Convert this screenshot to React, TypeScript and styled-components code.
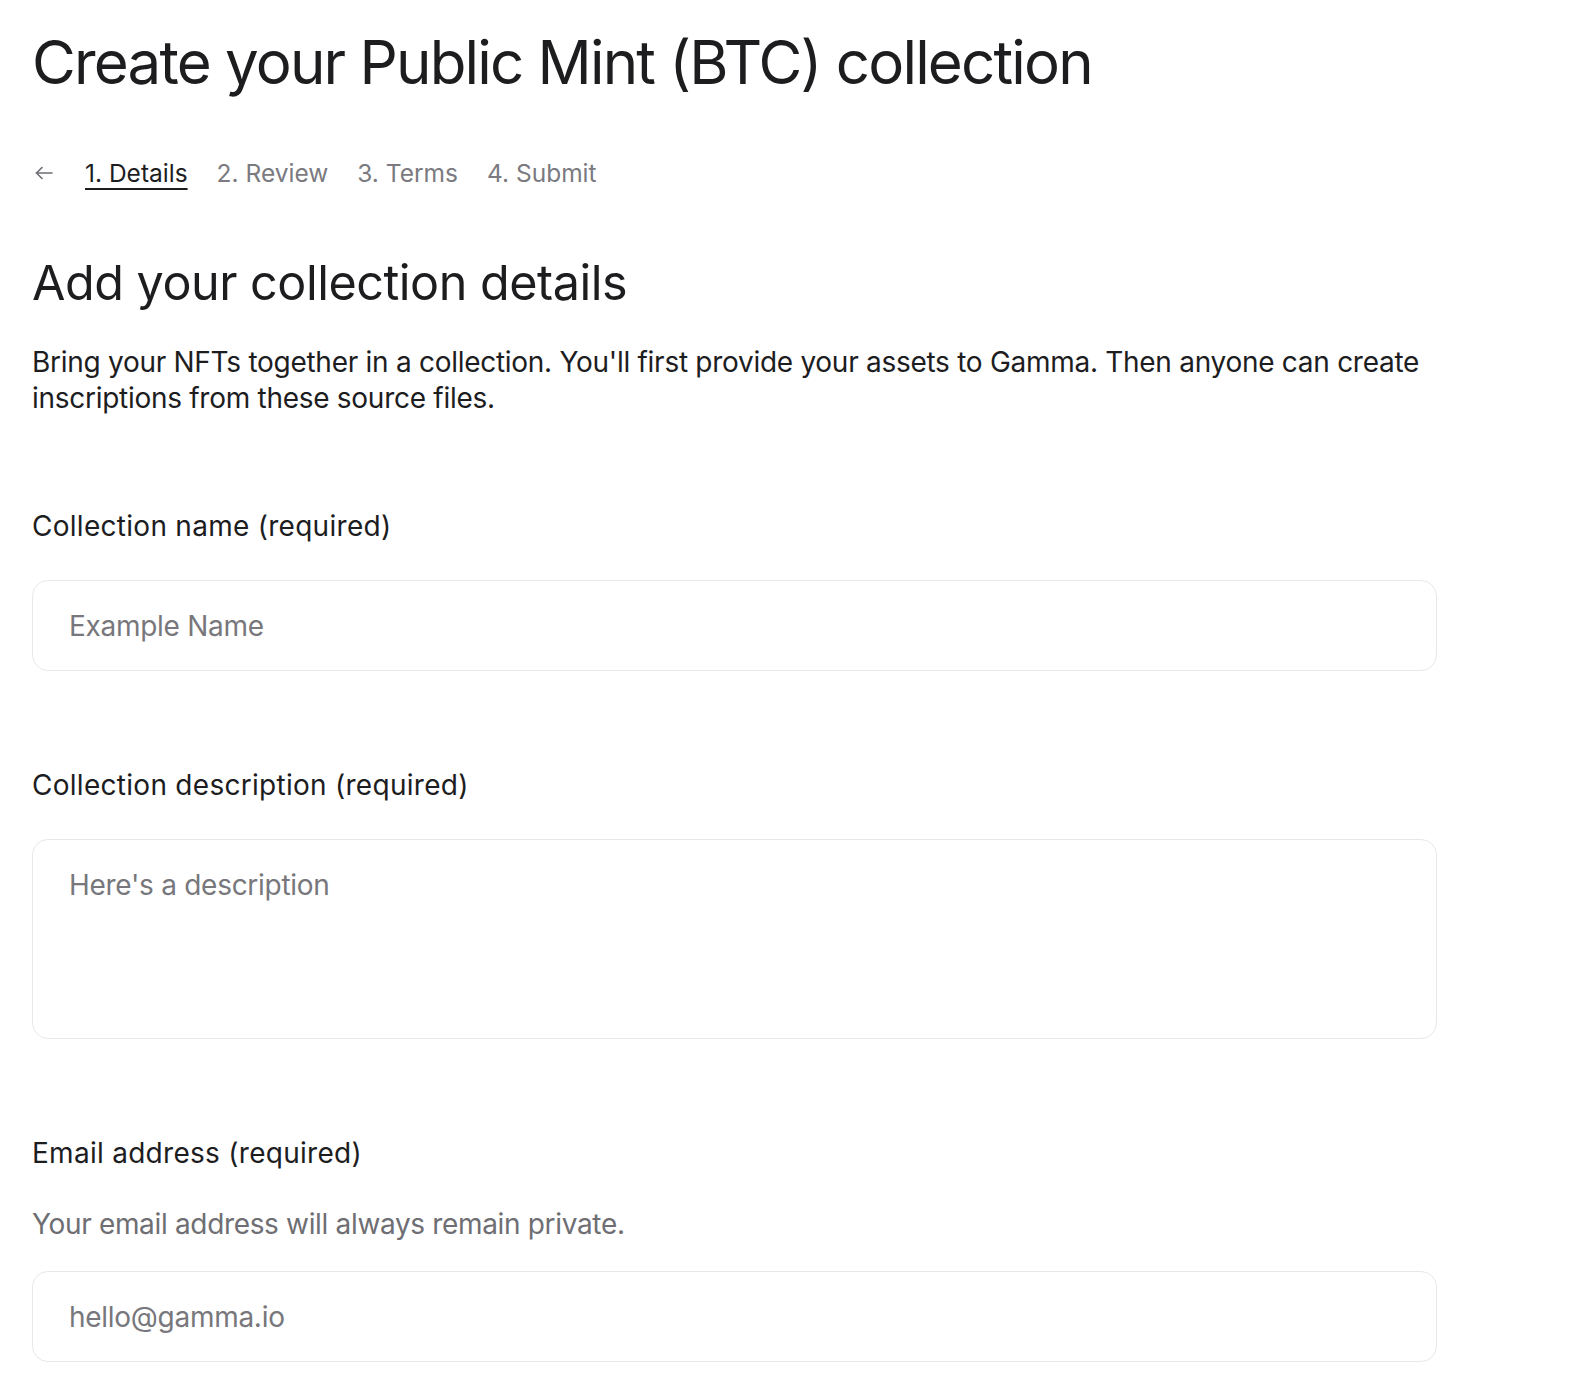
import React from 'react';
import styled, { createGlobalStyle } from 'styled-components';

const GlobalStyle = createGlobalStyle`
  * {
    box-sizing: border-box;
  }

  body {
    margin: 0;
    background: #ffffff;
    color: #1d1d1f;
    font-family: Inter, "Noto Sans", "Liberation Sans", sans-serif;
    -webkit-font-smoothing: antialiased;
  }
`;

const Page = styled.main`
  padding: 24px 32px 0;
`;

const Content = styled.div`
  max-width: 1405px;
`;

const Title = styled.h1`
  margin: 0;
  font-size: 60px;
  line-height: 77px;
  font-weight: 400;
  letter-spacing: -0.03em;
  color: #1d1d1f;
`;

const Steps = styled.nav`
  display: flex;
  align-items: center;
  gap: 29px;
  height: 36px;
  margin-top: 54px;
`;

const BackButton = styled.button`
  display: flex;
  align-items: center;
  padding: 0;
  margin: 0 3px 0 3px;
  border: none;
  background: transparent;
  color: #6e6e73;
  cursor: pointer;

  svg {
    width: 18px;
    height: 14px;
  }
`;

const Step = styled.a<{ $active?: boolean }>`
  font-size: 24.5px;
  line-height: 36px;
  color: ${({ $active }) => ($active ? '#1d1d1f' : '#7a7a80')};
  text-decoration: ${({ $active }) => ($active ? 'underline' : 'none')};
  text-decoration-thickness: 1.5px;
  text-underline-offset: 6px;
  cursor: pointer;
`;

const Heading = styled.h2`
  margin: 62px 0 0;
  font-size: 48.5px;
  line-height: 60px;
  font-weight: 400;
  letter-spacing: -0.01em;
  color: #1d1d1f;
`;

const Intro = styled.p`
  margin: 31px 0 0;
  font-size: 28px;
  line-height: 36px;
  letter-spacing: -0.01em;
  color: #1d1d1f;
`;

const Form = styled.form`
  display: flex;
  flex-direction: column;
  gap: 96px;
  margin-top: 92px;
`;

const Field = styled.div`
  display: flex;
  flex-direction: column;
`;

const Label = styled.label`
  font-size: 28px;
  line-height: 36px;
  letter-spacing: 0.01em;
  color: #1d1d1f;
`;

const Hint = styled.p`
  margin: 35px 0 0;
  font-size: 28px;
  line-height: 36px;
  letter-spacing: -0.012em;
  color: #6e6e73;
`;

const controlStyles = `
  width: 100%;
  margin-top: 36px;
  border: 1px solid #e8e8ea;
  border-radius: 16px;
  background: #ffffff;
  font-family: Inter, "Noto Sans", "Liberation Sans", sans-serif;
  font-size: 28px;
  letter-spacing: -0.01em;
  color: #1d1d1f;
  outline: none;

  &::placeholder {
    color: #77777c;
  }

  &:focus {
    border-color: #c7c7cc;
  }
`;

const TextInput = styled.input<{ $tight?: boolean }>`
  ${controlStyles}
  height: 91px;
  padding: 0 36px;
  ${({ $tight }) => ($tight ? 'margin-top: 29px;' : '')}
`;

const TextArea = styled.textarea`
  ${controlStyles}
  display: block;
  height: 200px;
  padding: 27px 36px;
  line-height: 36px;
  resize: none;
`;

export default function App() {
  return (
    <>
      <GlobalStyle />
      <Page>
        <Content>
          <Title>Create your Public Mint (BTC) collection</Title>

          <Steps>
            <BackButton type="button" aria-label="Back">
              <svg viewBox="0 0 18 14" fill="none" stroke="currentColor" strokeWidth="1.6" strokeLinecap="round" strokeLinejoin="round">
                <path d="M17 7H1.5" />
                <path d="M7 1.5 1.5 7 7 12.5" />
              </svg>
            </BackButton>
            <Step $active>1. Details</Step>
            <Step>2. Review</Step>
            <Step>3. Terms</Step>
            <Step>4. Submit</Step>
          </Steps>

          <Heading>Add your collection details</Heading>
          <Intro>
            Bring your NFTs together in a collection. You'll first provide your assets to Gamma. Then
            anyone can create inscriptions from these source files.
          </Intro>

          <Form onSubmit={(e) => e.preventDefault()}>
            <Field>
              <Label htmlFor="name">Collection name (required)</Label>
              <TextInput id="name" type="text" placeholder="Example Name" />
            </Field>

            <Field>
              <Label htmlFor="description">Collection description (required)</Label>
              <TextArea id="description" placeholder="Here's a description" />
            </Field>

            <Field>
              <Label htmlFor="email">Email address (required)</Label>
              <Hint>Your email address will always remain private.</Hint>
              <TextInput $tight id="email" type="email" placeholder="hello@gamma.io" />
            </Field>
          </Form>
        </Content>
      </Page>
    </>
  );
}
